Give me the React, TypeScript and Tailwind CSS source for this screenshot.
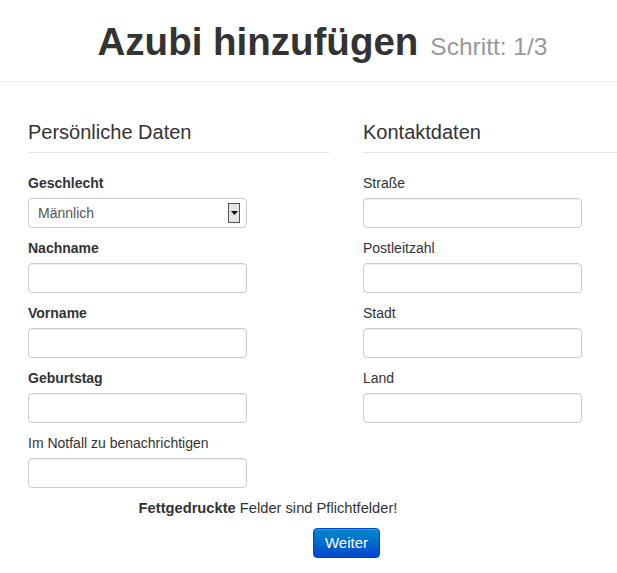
import React from 'react'

const font = { fontFamily: '"Liberation Sans", Arial, sans-serif' }

const Field: React.FC<{ label: string; bold?: boolean }> = ({ label, bold }) => (
  <div className="flex flex-col">
    <label className={`text-[14px] leading-[20px] mb-[5px] text-[#333] ${bold ? 'font-bold' : ''}`}>{label}</label>
    <input
      type="text"
      className="w-[219px] h-[30px] mb-[10px] px-[9px] border border-[#ccc] rounded-[4px] bg-white text-[14px] text-[#555] shadow-[inset_0_1px_1px_rgba(0,0,0,0.075)] outline-none"
    />
  </div>
)

const GenderSelect: React.FC = () => (
  <div className="flex flex-col">
    <label className="text-[14px] leading-[20px] mb-[5px] text-[#333] font-bold">Geschlecht</label>
    <div className="relative w-[219px] h-[30px] mb-[10px] border border-[#ccc] rounded-[4px] bg-white flex items-center pl-[9px] text-[14px] text-[#555]">
      Männlich
      {/* classic windows dropdown arrow */}
      <div className="absolute left-[199px] top-[4px] w-[12px] h-[20px] border border-[#555] bg-[#e4e4e4] flex items-center justify-center">
        <svg width="7" height="4" viewBox="0 0 7 4">
          <path d="M0 0h7L3.5 4z" fill="#000" />
        </svg>
      </div>
    </div>
  </div>
)

export default function App() {
  return (
    <div className="w-[617px] h-[573px] overflow-hidden bg-white text-[#333]" style={font}>
      {/* Header */}
      <div className="h-[82px] border-b border-[#eee]">
        <h1 className="pt-[22px] pl-[28px] flex justify-center items-baseline leading-[40px]">
          <span className="text-[38.5px] font-bold text-[#333]">Azubi hinzufügen</span>
          <span className="text-[24.5px] text-[#999] ml-[12px]">Schritt: 1/3</span>
        </h1>
      </div>

      {/* Form */}
      <div className="grid grid-cols-[301px_320px] gap-x-[34px] pl-[28px] mt-[30px]">
        <div>
          <div className="text-[20px] leading-[40px] border-b border-[#e5e5e5] mb-[20px]">Persönliche Daten</div>
          <GenderSelect />
          <Field label="Nachname" bold />
          <Field label="Vorname" bold />
          <Field label="Geburtstag" bold />
          <Field label="Im Notfall zu benachrichtigen" />
        </div>
        <div>
          <div className="text-[20px] leading-[40px] border-b border-[#e5e5e5] mb-[20px]">Kontaktdaten</div>
          <Field label="Straße" />
          <Field label="Postleitzahl" />
          <Field label="Stadt" />
          <Field label="Land" />
        </div>
      </div>

      {/* Footer */}
      <div className="ml-[28px] w-[480px] text-center text-[14.7px] leading-[20px]">
        <b>Fettgedruckte</b> Felder sind Pflichtfelder!
      </div>
      <div className="mt-[10px] ml-[313px]">
        <button className="h-[30px] w-[67px] text-[15px] leading-[20px] text-white rounded-[4px] border border-[#0044cc] bg-gradient-to-b from-[#0088cc] to-[#0044cc] shadow-[inset_0_1px_0_rgba(255,255,255,0.2)]">
          Weiter
        </button>
      </div>
    </div>
  )
}
